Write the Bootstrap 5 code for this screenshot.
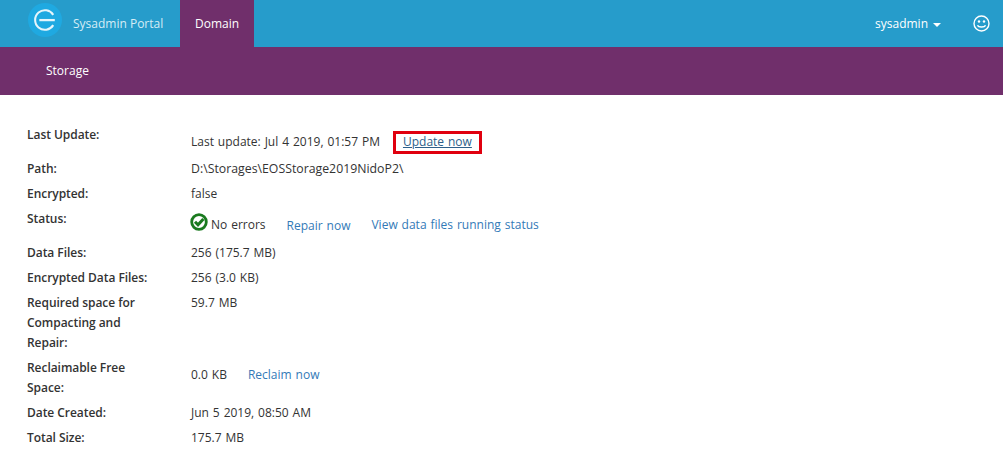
<!DOCTYPE html>
<html lang="en">
<head>
    <meta charset="UTF-8">
    <meta name="viewport" content="width=device-width, initial-scale=1.0">
    <title>Sysadmin Portal - Storage</title>
    <link href="https://cdn.jsdelivr.net/npm/bootstrap@5.3.3/dist/css/bootstrap.min.css" rel="stylesheet">
    <style>
        body {
            background-color: #fff;
            color: #333;
            font-family: "Open Sans", "Noto Sans", sans-serif;
            font-size: 12px;
            line-height: 20px;
            overflow: hidden;
        }
        a { color: #337ab7; text-decoration: none; }
        .top-bar { background-color: #269ccb; height: 47px; padding-left: 28px; padding-right: 13px; }
        .brand { color: #d5edf6; width: 152px; gap: 11px; }
        .logo { width: 34px; height: 34px; margin-top: -7px; }
        .tab-active { background-color: #702f6b; color: #fff; width: 74px; height: 47px; }
        .user-menu { color: #fff; margin-right: 32px; }
        .caret { border-top: 4px solid #fff; border-left: 4px solid transparent; border-right: 4px solid transparent; margin-left: 5px; margin-top: 2px; }
        .smiley { width: 17px; height: 17px; }
        .sub-bar { background-color: #702f6b; height: 48px; padding-left: 46px; color: #fff; }
        .details { padding: 30px 0 0 27px; }
        .detail-row { margin-bottom: 5px; }
        .detail-label { width: 164px; flex: none; font-weight: 600; padding-right: 42px; letter-spacing: -.05px; }
        .detail-value { word-spacing: .8px; }
        .path-value { font-size: 12.3px; }
        .shift { padding-top: 7px; min-height: 29px; }
        .update-box { border: 3px solid #e0000f; padding: 0 7px; margin-left: 13px; height: 23px; line-height: 15px; margin-top: -1px; }
        .update-box a { color: #2d5f8a; text-decoration: underline; }
        .check { width: 18px; height: 18px; margin-right: 3px; margin-left: -1px; margin-top: -3px; }
        .action { margin-left: 21px; }
        .no-errors { margin-top: -1px; }
    </style>
</head>
<body>
<!-- Top bar -->
<div class="top-bar d-flex align-items-center">
    <div class="brand d-flex align-items-center">
        <svg class="logo" viewBox="0 0 33 33">
            <circle cx="16.5" cy="16.5" r="16.5" fill="#1fa9e1"/>
            <path d="M24.5 11.5A9.5 9.5 0 1 0 24.5 21.5" fill="none" stroke="#e6f5fb" stroke-width="2"/>
            <rect x="11" y="15.5" width="15" height="2.2" fill="#e6f5fb"/>
        </svg>
        <span>Sysadmin Portal</span>
    </div>
    <div class="tab-active d-flex align-items-center justify-content-center">Domain</div>
    <div class="user-menu d-flex align-items-center ms-auto">sysadmin<span class="caret"></span></div>
    <svg class="smiley" viewBox="0 0 17 17" fill="none" stroke="#fff">
        <circle cx="8.5" cy="8.5" r="7.5" stroke-width="1.4"/>
        <circle cx="6" cy="6.5" r="1.2" fill="#fff" stroke="none"/>
        <circle cx="11" cy="6.5" r="1.2" fill="#fff" stroke="none"/>
        <path d="M4.5 10.2c1 2.4 7 2.4 8 0" stroke-width="1.3"/>
    </svg>
</div>
<div class="sub-bar d-flex align-items-center">Storage</div>

<!-- Storage details -->
<div class="details">
    <div class="detail-row d-flex">
        <div class="detail-label">Last Update:</div>
        <div class="detail-value shift d-flex align-items-start">
            <span>Last update: Jul 4 2019, 01:57 PM</span>
            <span class="update-box"><a href="#">Update now</a></span>
        </div>
    </div>
    <div class="detail-row d-flex">
        <div class="detail-label">Path:</div>
        <div class="detail-value path-value">D:\Storages\EOSStorage2019NidoP2\</div>
    </div>
    <div class="detail-row d-flex">
        <div class="detail-label">Encrypted:</div>
        <div class="detail-value">false</div>
    </div>
    <div class="detail-row d-flex">
        <div class="detail-label">Status:</div>
        <div class="detail-value shift d-flex align-items-start">
            <svg class="check" viewBox="0 0 18 18">
                <circle cx="9" cy="9" r="7.3" fill="none" stroke="#1a7a1f" stroke-width="2.8"/>
                <path d="M5 8.8l3 3 5.4-5.8" fill="none" stroke="#1a7a1f" stroke-width="3"/>
            </svg>
            <span class="no-errors">No errors</span>
            <a class="action" href="#">Repair now</a>
            <a class="action no-errors" href="#">View data files running status</a>
        </div>
    </div>
    <div class="detail-row d-flex">
        <div class="detail-label">Data Files:</div>
        <div class="detail-value">256 (175.7 MB)</div>
    </div>
    <div class="detail-row d-flex">
        <div class="detail-label">Encrypted Data Files:</div>
        <div class="detail-value">256 (3.0 KB)</div>
    </div>
    <div class="detail-row d-flex">
        <div class="detail-label">Required space for Compacting and Repair:</div>
        <div class="detail-value">59.7 MB</div>
    </div>
    <div class="detail-row d-flex">
        <div class="detail-label">Reclaimable Free Space:</div>
        <div class="detail-value shift">0.0 KB<a class="action" href="#">Reclaim now</a></div>
    </div>
    <div class="detail-row d-flex">
        <div class="detail-label">Date Created:</div>
        <div class="detail-value">Jun 5 2019, 08:50 AM</div>
    </div>
    <div class="detail-row d-flex">
        <div class="detail-label">Total Size:</div>
        <div class="detail-value">175.7 MB</div>
    </div>
</div>

<script src="https://cdn.jsdelivr.net/npm/bootstrap@5.3.3/dist/js/bootstrap.bundle.min.js"></script>
</body>
</html>
